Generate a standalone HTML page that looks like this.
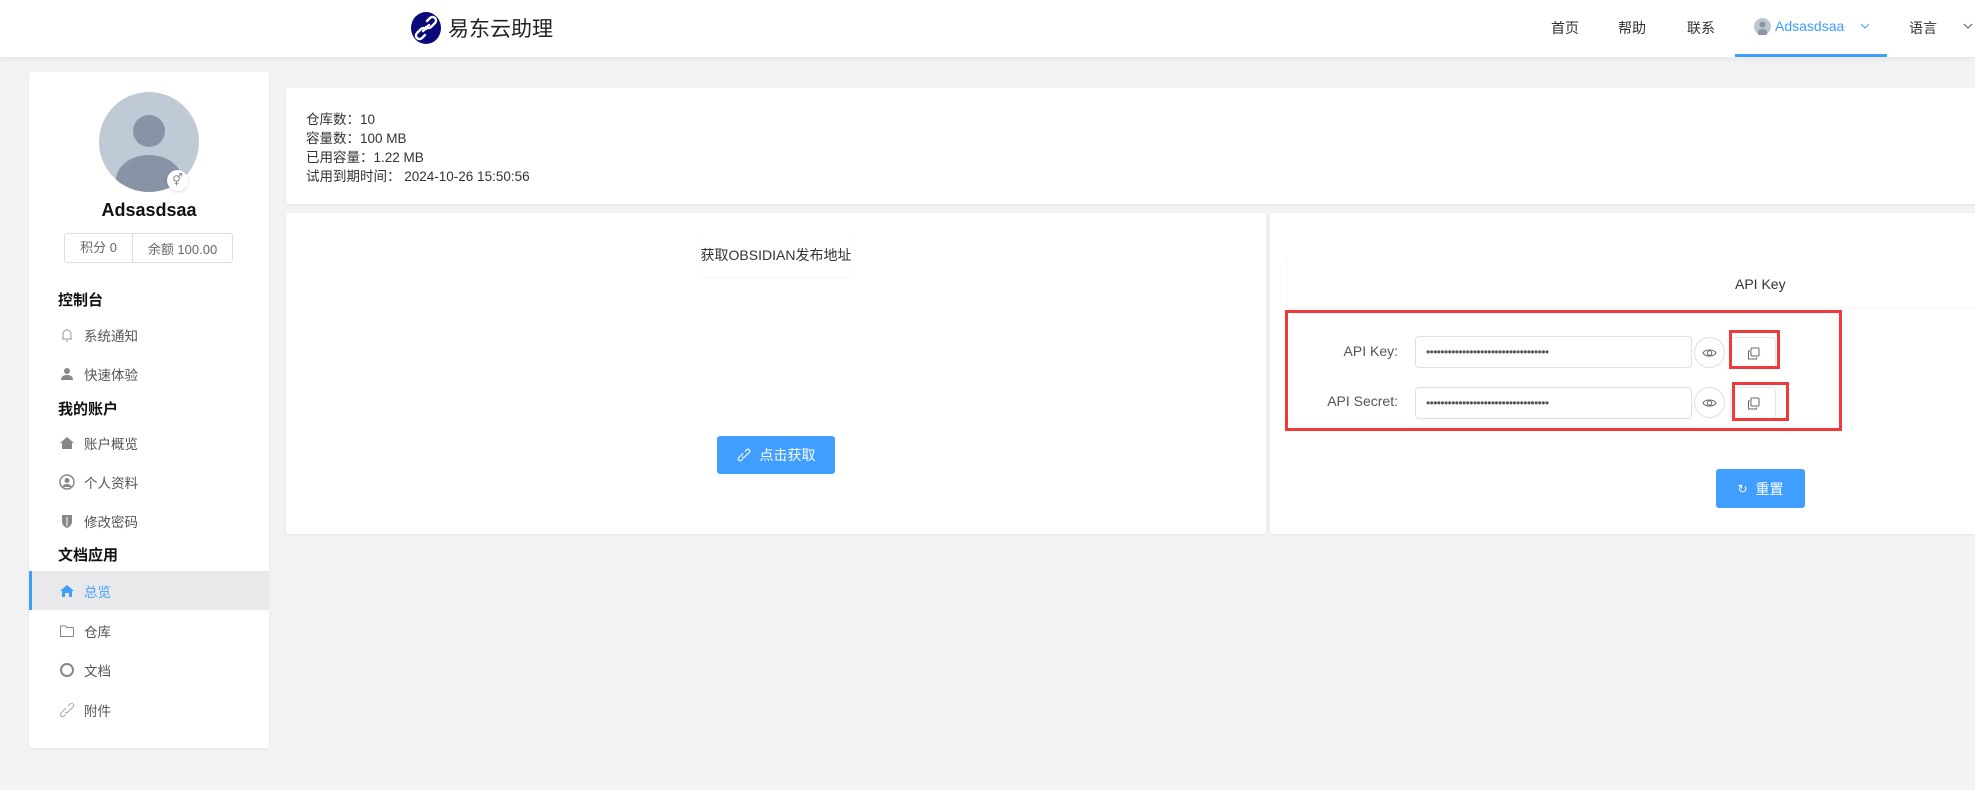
<!DOCTYPE html>
<html><head><meta charset="utf-8"><style>
*{box-sizing:border-box;margin:0;padding:0}
body{width:1975px;height:790px;background:#f3f3f4;font-family:"Liberation Sans","Noto Sans CJK SC",sans-serif;position:relative;overflow:hidden;color:#333}
.a{position:absolute}
.hdr{left:0;top:0;width:1975px;height:57px;background:#fff;box-shadow:0 2px 6px rgba(0,0,0,.06)}
.nav{font-size:14px;color:#303133;top:18px}
.card{background:#fff;border-radius:3px;box-shadow:0 1px 4px rgba(0,0,0,.06)}
.side-h{left:58px;font-size:15px;font-weight:bold;color:#111}
.item{left:59px;font-size:13.5px;color:#555;display:flex;align-items:center}
.item svg{margin-right:9px}
.info{left:306px;font-size:13.5px;color:#333}
.lbl{font-size:14px;color:#555;text-align:right;width:150px;left:1248px}
.inp{left:1415px;width:277px;height:32px;border:1px solid #dcdfe6;border-radius:4px;font-size:12px;color:#555;padding-left:10px;line-height:30px;letter-spacing:-0.6px}
.eye{left:1694px;width:31px;height:31px;border:1px solid #dcdfe6;border-radius:50%;display:flex;align-items:center;justify-content:center}
.cp{left:1730px;width:46px;height:32px;border:1px solid #e4e7ed;border-radius:4px;display:flex;align-items:center;justify-content:center}
.red{border:3px solid #f03a3a}
.btn{background:#409eff;color:#fff;border-radius:3px;font-size:14px;display:flex;align-items:center;justify-content:center}
</style></head><body>
<div class="a hdr"></div>
<svg class="a" style="left:410px;top:12px" width="32" height="32" viewBox="0 0 32 32"><ellipse cx="16" cy="16" rx="15" ry="16" fill="#0a0a7a"/><path d="M17 9l3-3a3.5 3.5 0 015 5l-4 4a3.5 3.5 0 01-5 0M15 23l-3 3a3.5 3.5 0 01-5-5l4-4a3.5 3.5 0 015 0M13 19l6-6" stroke="#fff" stroke-width="2.4" fill="none" stroke-linecap="round"/></svg>
<div class="a" style="left:448px;top:13px;font-size:21px;color:#222">易东云助理</div>
<div class="a nav" style="left:1551px">首页</div>
<div class="a nav" style="left:1618px">帮助</div>
<div class="a nav" style="left:1687px">联系</div>
<svg class="a" style="left:1754px;top:18px" width="17" height="17" viewBox="0 0 17 17"><circle cx="8.5" cy="8.5" r="8.5" fill="#c0c6d0"/><circle cx="8.5" cy="6.5" r="3" fill="#8a96a6"/><ellipse cx="8.5" cy="14.5" rx="5" ry="3.5" fill="#8a96a6"/></svg>
<div class="a nav" style="left:1775px;color:#409eff">Adsasdsaa</div>
<svg class="a" style="left:1860px;top:22px" width="10" height="8"><path d="M1 2l4 4 4-4" stroke="#409eff" fill="none"/></svg>
<div class="a" style="left:1735px;top:54px;width:152px;height:3px;background:#409eff"></div>
<div class="a nav" style="left:1909px">语言</div>
<svg class="a" style="left:1963px;top:22px" width="10" height="8"><path d="M1 2l4 4 4-4" stroke="#555" fill="none"/></svg>

<div class="a card" style="left:29px;top:72px;width:240px;height:676px"></div>
<div class="a" style="left:99px;top:92px;width:100px;height:100px;border-radius:50%;background:#c0c9d6;overflow:hidden"><div class="a" style="left:34px;top:23px;width:32px;height:32px;border-radius:50%;background:#8794a6"></div><div class="a" style="left:17px;top:63px;width:66px;height:50px;border-radius:50%;background:#8794a6"></div></div>
<div class="a" style="left:167px;top:170px;width:21px;height:21px;border-radius:50%;background:#fff;box-shadow:0 1px 3px rgba(0,0,0,.15);font-size:12px;color:#888;text-align:center;line-height:21px">⚥</div>
<div class="a" style="left:29px;top:200px;width:240px;text-align:center;font-size:18px;font-weight:bold;color:#111">Adsasdsaa</div>
<div class="a" style="left:64px;top:233px;width:169px;height:30px;border:1px solid #dcdfe6;border-radius:3px;font-size:13px;color:#666;display:flex;align-items:center"><span style="width:68px;text-align:center;border-right:1px solid #dcdfe6;line-height:28px">积分 0</span><span style="flex:1;text-align:center">余额 100.00</span></div>
<div class="a side-h" style="top:289px">控制台</div>
<div class="a item" style="top:325px"><svg width="16" height="16" viewBox="0 0 16 16"><path d="M4 12V7a4 4 0 018 0v5H3h10M7 14h2M8 2v1" stroke="#999" fill="none"/></svg>系统通知</div>
<div class="a item" style="top:364px"><svg width="16" height="16" viewBox="0 0 16 16"><circle cx="8" cy="5" r="3" fill="#888"/><path d="M2 14c0-4 3-5 6-5s6 1 6 5z" fill="#888"/></svg>快速体验</div>
<div class="a side-h" style="top:398px">我的账户</div>
<div class="a item" style="top:433px"><svg width="16" height="16" viewBox="0 0 16 16"><path d="M1 8l7-6 7 6h-2v6H3V8z" fill="#888"/></svg>账户概览</div>
<div class="a item" style="top:472px"><svg width="16" height="16" viewBox="0 0 16 16"><circle cx="8" cy="8" r="7" stroke="#888" fill="none" stroke-width="1.5"/><circle cx="8" cy="6.5" r="2.5" fill="#888"/><path d="M3.5 13c1-3 3-3 4.5-3s3.5 0 4.5 3" fill="#888"/></svg>个人资料</div>
<div class="a item" style="top:511px"><svg width="16" height="16" viewBox="0 0 16 16"><path d="M3 2h10v7c0 3-3 5-5 6-2-1-5-3-5-6z" fill="#888"/><path d="M8 4v9" stroke="#fff"/></svg>修改密码</div>
<div class="a side-h" style="top:544px">文档应用</div>
<div class="a" style="left:29px;top:571px;width:240px;height:39px;background:#e9e9eb;border-left:3px solid #409eff"></div>
<div class="a item" style="top:581px;color:#409eff"><svg width="16" height="16" viewBox="0 0 16 16"><path d="M1 8l7-6 7 6h-2v6h-3v-4H6v4H3V8z" fill="#409eff"/></svg>总览</div>
<div class="a item" style="top:621px"><svg width="16" height="16" viewBox="0 0 16 16"><path d="M1.5 3h5l1 1.5h7v9h-13z" stroke="#888" fill="none"/></svg>仓库</div>
<div class="a item" style="top:660px"><svg width="16" height="16" viewBox="0 0 16 16"><circle cx="8" cy="8" r="6" stroke="#888" fill="none" stroke-width="2"/></svg>文档</div>
<div class="a item" style="top:700px"><svg width="16" height="16" viewBox="0 0 16 16"><path d="M9 4l2-2a2 2 0 013 3l-5 5a2 2 0 01-3 0M7 12l-2 2a2 2 0 01-3-3l5-5" stroke="#aaa" fill="none"/></svg>附件</div>

<div class="a card" style="left:286px;top:88px;width:1700px;height:116px"></div>
<div class="a info" style="top:108px">仓库数：10</div>
<div class="a info" style="top:127px">容量数：100 MB</div>
<div class="a info" style="top:146px">已用容量：1.22 MB</div>
<div class="a info" style="top:165px">试用到期时间：&nbsp;2024-10-26 15:50:56</div>

<div class="a card" style="left:286px;top:213px;width:980px;height:321px"></div>
<div class="a" style="left:700px;top:235px;width:152px;height:42px;box-shadow:0 1px 2px rgba(0,0,0,.05);font-size:14px;color:#333;text-align:center;line-height:40px">获取OBSIDIAN发布地址</div>
<div class="a btn" style="left:717px;top:436px;width:118px;height:38px"><svg width="14" height="14" viewBox="0 0 16 16" style="margin-right:9px"><path d="M9 4l2-2a2 2 0 013 3l-5 5a2 2 0 01-3 0M7 12l-2 2a2 2 0 01-3-3l5-5" stroke="#fff" fill="none" stroke-width="1.3"/></svg>点击获取</div>

<div class="a card" style="left:1270px;top:213px;width:720px;height:321px"></div>
<div class="a" style="left:1288px;top:255px;width:700px;height:52px;box-shadow:0 1px 2px rgba(0,0,0,.05)"></div>
<div class="a" style="left:1735px;top:276px;font-size:14px;color:#333">API Key</div>
<div class="a red" style="left:1285px;top:310px;width:557px;height:121px"></div>
<div class="a lbl" style="top:343px">API Key:</div>
<div class="a lbl" style="top:393px">API Secret:</div>
<div class="a inp" style="top:336px">••••••••••••••••••••••••••••••••••</div>
<div class="a inp" style="top:387px">••••••••••••••••••••••••••••••••••</div>
<div class="a eye" style="top:337px"><svg width="15" height="12" viewBox="0 0 15 12"><path d="M1 6c2-4 11-4 13 0-2 4-11 4-13 0z" stroke="#666" fill="none"/><circle cx="7.5" cy="6" r="2.2" stroke="#666" fill="none"/></svg></div>
<div class="a eye" style="top:387px"><svg width="15" height="12" viewBox="0 0 15 12"><path d="M1 6c2-4 11-4 13 0-2 4-11 4-13 0z" stroke="#666" fill="none"/><circle cx="7.5" cy="6" r="2.2" stroke="#666" fill="none"/></svg></div>
<div class="a cp" style="top:337px"><svg width="13" height="13" viewBox="0 0 13 13"><rect x="4" y="1" width="8" height="8" rx="1" stroke="#666" fill="none"/><path d="M3 4H1.5v8h8v-1.5" stroke="#666" fill="none"/></svg></div>
<div class="a cp" style="top:387px"><svg width="13" height="13" viewBox="0 0 13 13"><rect x="4" y="1" width="8" height="8" rx="1" stroke="#666" fill="none"/><path d="M3 4H1.5v8h8v-1.5" stroke="#666" fill="none"/></svg></div>
<div class="a red" style="left:1729px;top:330px;width:51px;height:39px"></div>
<div class="a red" style="left:1732px;top:382px;width:57px;height:39px"></div>
<div class="a btn" style="left:1716px;top:469px;width:89px;height:39px"><span style="margin-right:8px;font-size:12px">↻</span>重置</div>
</body></html>
